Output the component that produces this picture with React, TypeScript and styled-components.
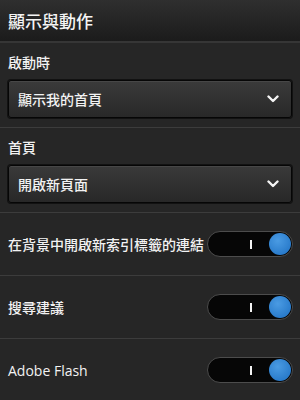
import React from 'react';
import styled, { createGlobalStyle } from 'styled-components';

const GlobalStyle = createGlobalStyle`
  html, body {
    margin: 0;
    padding: 0;
    background: #262626;
  }
  body {
    font-family: "Noto Sans CJK TC", "Noto Sans", sans-serif;
    font-weight: 500;
    color: #f2f2f2;
  }
`;

const Page = styled.div`
  width: 300px;
  height: 400px;
  overflow: hidden;
  background: #262626;
`;

const Header = styled.div`
  height: 41px;
  display: flex;
  align-items: center;
  padding-left: 8px;
  background: linear-gradient(#2f2f2f, #1b1b1b);
  border-bottom: 2px solid #363636;
  font-size: 17px;
  color: #f4f4f4;
`;

const Section = styled.div`
  display: flex;
  flex-direction: column;
  gap: 8px;
  padding: 9px 8px;
  border-bottom: 1px solid #3c3c3c;
`;

const Label = styled.div`
  font-size: 14px;
  line-height: 20px;
`;

const Select = styled.div`
  height: 36px;
  display: flex;
  align-items: center;
  justify-content: space-between;
  padding: 0 12px 0 9px;
  border: 1px solid #060606;
  border-radius: 3px;
  background: linear-gradient(#3a3a3a, #282828);
  box-shadow: inset 0 1px 0 #474747, 0 0 0 1px #121212;
  font-size: 14px;
`;

const Row = styled.div`
  height: 62px;
  display: flex;
  align-items: center;
  justify-content: space-between;
  padding: 0 7px 0 8px;
  border-bottom: 1px solid #3c3c3c;
  font-size: 14px;
`;

const RowText = styled.span<{ $latin?: boolean }>`
  font-family: ${(p) => (p.$latin ? '"Open Sans", sans-serif' : '"Noto Sans CJK TC", sans-serif')};
  font-weight: ${(p) => (p.$latin ? 400 : 500)};
  font-size: 14px;
`;

const Toggle = styled.div`
  width: 83px;
  height: 24px;
  flex-shrink: 0;
  display: flex;
  align-items: center;
  justify-content: flex-end;
  gap: 17px;
  padding-right: 1px;
  border: 1px solid #4c4c4c;
  border-radius: 13px;
  background: #060606;
`;

const OnMark = styled.span`
  width: 2px;
  height: 9px;
  background: #f4f4f4;
`;

const Knob = styled.span`
  width: 22px;
  height: 22px;
  border-radius: 50%;
  background: radial-gradient(circle at 40% 35%, #4a9be3, #1d6fc2);
`;

const Chevron = () => (
  <svg width="12" height="8" viewBox="0 0 12 8">
    <polyline points="1.5,1.5 6,6 10.5,1.5" fill="none" stroke="#f4f4f4" strokeWidth="2.4" strokeLinecap="round" strokeLinejoin="round" />
  </svg>
);

const Switch = () => (
  <Toggle>
    <OnMark />
    <Knob />
  </Toggle>
);

export default function App() {
  return (
    <Page>
      <GlobalStyle />
      <Header>顯示與動作</Header>
      <Section>
        <Label>啟動時</Label>
        <Select>
          <span>顯示我的首頁</span>
          <Chevron />
        </Select>
      </Section>
      <Section>
        <Label>首頁</Label>
        <Select>
          <span>開啟新頁面</span>
          <Chevron />
        </Select>
      </Section>
      <Row>
        <RowText>在背景中開啟新索引標籤的連結</RowText>
        <Switch />
      </Row>
      <Row>
        <RowText>搜尋建議</RowText>
        <Switch />
      </Row>
      <Row>
        <RowText $latin>Adobe Flash</RowText>
        <Switch />
      </Row>
    </Page>
  );
}
